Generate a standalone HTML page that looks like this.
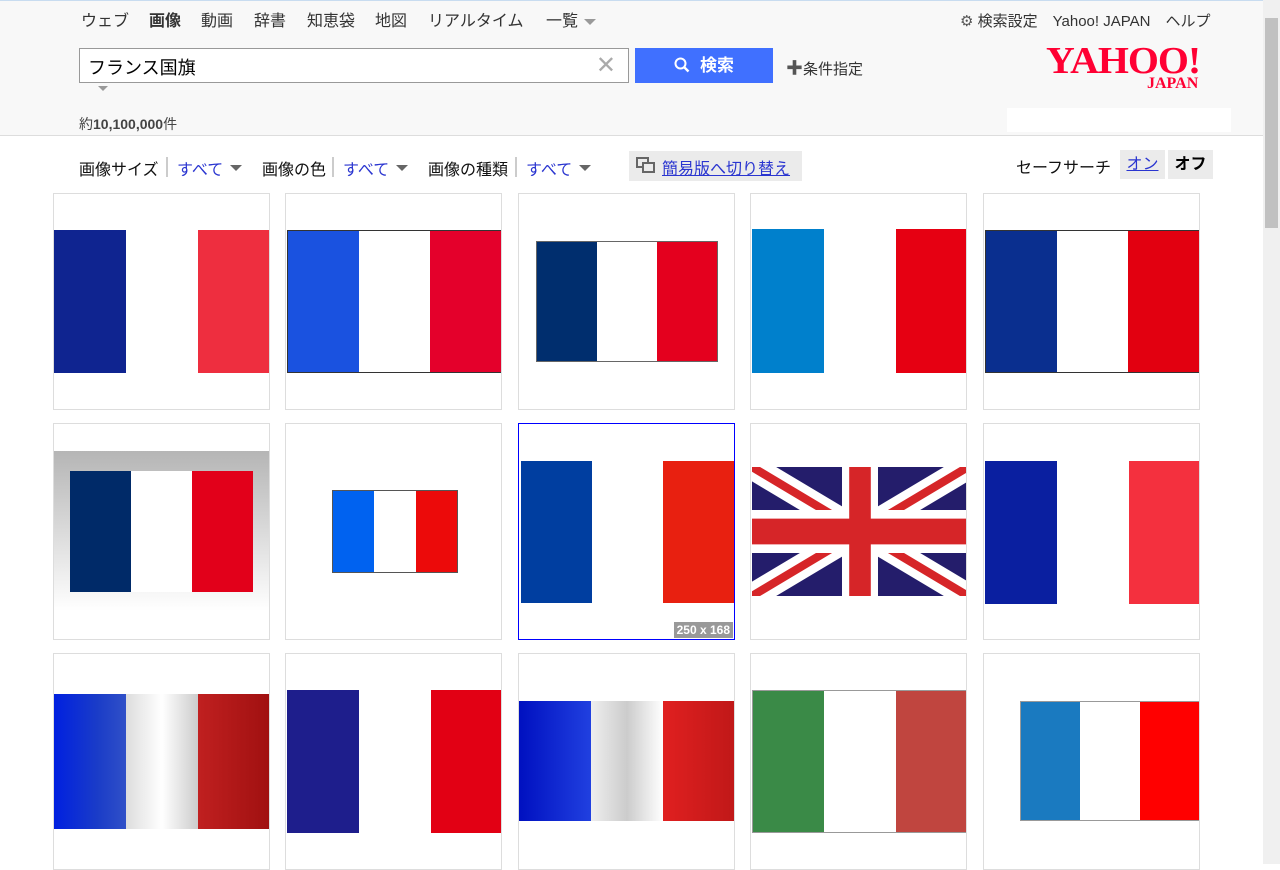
<!DOCTYPE html>
<html><head><meta charset="utf-8"><style>
*{margin:0;padding:0;box-sizing:border-box}
body{width:1280px;height:864px;overflow:hidden;background:#fff;font-family:"Liberation Sans","Noto Sans CJK JP",sans-serif;color:#333;position:relative}
.hdr{position:absolute;left:0;top:0;width:1263px;height:136px;background:#f8f8f8;border-bottom:1px solid #ddd;border-top:1px solid #c8dcf0}
.a{position:absolute;white-space:nowrap}
.nav span{position:absolute;top:0;font-size:16px;color:#333}
.c{position:absolute;width:217px;height:217px;border:1px solid #ddd;background:#fff;overflow:hidden}
.f{position:absolute;display:flex}
.f div{flex:1}
.sb{position:absolute;left:1263px;top:0;width:17px;height:864px;background:#f0f0f0}
.sb div{position:absolute;left:2px;top:18px;width:13px;height:210px;background:#c1c1c1}
.blue{color:#2a35d0}
.tri{display:inline-block;width:0;height:0;border-left:6px solid transparent;border-right:6px solid transparent;border-top:6px solid #666;vertical-align:middle;margin-left:6px}
.fl span{position:absolute;top:0}
.fl .t{top:9px;width:0;height:0;border-left:6px solid transparent;border-right:6px solid transparent;border-top:6px solid #666}
.sep{width:2px;height:20px;background:#ccc;top:1px!important}
</style></head><body>
<div class="hdr"></div>
<div class="a nav" style="left:0;top:7px;width:700px;height:24px"><span style="left:81px">ウェブ</span><span style="left:149px;font-weight:bold">画像</span><span style="left:201px">動画</span><span style="left:254px">辞書</span><span style="left:307px">知恵袋</span><span style="left:375px">地図</span><span style="left:428px">リアルタイム</span><span style="left:546px">一覧<i class="tri" style="border-top-color:#999"></i></span></div>
<div class="a" style="left:960px;top:10px;font-size:15px;color:#333"><span style="color:#555">⚙</span> 検索設定　Yahoo! JAPAN　ヘルプ</div>
<div class="a" style="left:79px;top:48px;width:550px;height:35px;border:1px solid #999;background:#fff;font-size:18px;padding:5px 0 0 8px;color:#000">フランス国旗<span style="position:absolute;right:12px;top:2px;color:#aaa;font-size:24px">✕</span></div>
<div class="a" style="left:98px;top:86px;border-left:5px solid transparent;border-right:5px solid transparent;border-top:5px solid #999"></div>
<div class="a" style="left:635px;top:48px;width:138px;height:35px;background:#4070ff;color:#fff;font-size:17px;font-weight:bold;text-align:center;line-height:35px">
<svg width="16" height="16" viewBox="0 0 16 16" style="vertical-align:-2px;margin-right:10px"><circle cx="6.5" cy="6.5" r="5" fill="none" stroke="#fff" stroke-width="2"/><path d="M10 10l4.5 4.5" stroke="#fff" stroke-width="2.4"/></svg>検索</div>
<div class="a" style="left:786px;top:54px;font-size:15px;color:#333"><b style="font-size:17px;color:#555">✚</b>条件指定</div>
<div class="a" style="left:1046px;top:44px;color:#ff0033;font-family:'Liberation Serif',serif;font-weight:bold;font-size:38px;line-height:34px;letter-spacing:-1px;transform:scaleX(1.05);transform-origin:left">YAHOO!</div>
<div class="a" style="left:1147px;top:75px;color:#ff0033;font-family:'Liberation Serif',serif;font-weight:bold;font-size:16px">JAPAN</div>
<div class="a" style="left:1007px;top:108px;width:224px;height:24px;background:#fff"></div>
<div class="a" style="left:79px;top:114px;font-size:14px;color:#444">約<b>10,100,000</b>件</div>
<div class="a fl" style="left:0;top:156px;width:620px;height:24px;font-size:16px;color:#111">
<span style="left:79px">画像サイズ</span><span class="sep" style="left:166px"></span><span class="blue" style="left:177px">すべて</span><span class="t" style="left:230px"></span>
<span style="left:262px">画像の色</span><span class="sep" style="left:332px"></span><span class="blue" style="left:343px">すべて</span><span class="t" style="left:396px"></span>
<span style="left:428px">画像の種類</span><span class="sep" style="left:515px"></span><span class="blue" style="left:526px">すべて</span><span class="t" style="left:579px"></span></div>
<div class="a" style="left:629px;top:151px;width:173px;height:30px;background:#ebebeb;font-size:16px;padding:4px 0 0 33px"><span style="position:absolute;left:7px;top:6px;width:13px;height:11px;border:2px solid #666"></span><span style="position:absolute;left:13px;top:11px;width:13px;height:11px;border:2px solid #666;background:#ebebeb"></span><a style="color:#2a35d0;text-decoration:underline">簡易版へ切り替え</a></div>
<div class="a" style="left:1016px;top:154px;font-size:16px;color:#111">セーフサーチ</div>
<div class="a" style="left:1120px;top:150px;width:45px;height:29px;background:#ebebeb;font-size:16px;text-align:center;line-height:29px"><a style="color:#2a35d0;text-decoration:underline">オン</a></div>
<div class="a" style="left:1168px;top:150px;width:45px;height:29px;background:#ebebeb;font-size:16px;font-weight:bold;text-align:center;line-height:29px;color:#000">オフ</div>

<!-- row1 -->
<div class="c" style="left:53px;top:193px"><div class="f" style="left:0;top:36px;width:216px;height:143px"><div style="background:#0f2490"></div><div></div><div style="background:#ee2e3f"></div></div></div>
<div class="c" style="left:285px;top:193px"><div class="f" style="left:1px;top:36px;width:215px;height:143px;border:1px solid #333"><div style="background:#1a52e0"></div><div></div><div style="background:#e4002b"></div></div></div>
<div class="c" style="left:518px;top:193px"><div class="f" style="left:17px;top:47px;width:182px;height:121px;border:1px solid #666"><div style="background:#002e6e"></div><div></div><div style="background:#e4001e"></div></div></div>
<div class="c" style="left:750px;top:193px"><div class="f" style="left:1px;top:35px;width:216px;height:144px"><div style="background:#0080cc"></div><div></div><div style="background:#e60012"></div></div></div>
<div class="c" style="left:983px;top:193px"><div class="f" style="left:1px;top:36px;width:215px;height:143px;border:1px solid #333"><div style="background:#0a2f8f"></div><div></div><div style="background:#e20010"></div></div></div>
<!-- row2 -->
<div class="c" style="left:53px;top:423px"><div style="position:absolute;left:0;top:27px;width:216px;height:160px;background:linear-gradient(#b5b5b5,#fff)"></div><div class="f" style="left:16px;top:47px;width:183px;height:121px"><div style="background:#002a68"></div><div style="background:#fff"></div><div style="background:#e2001a"></div></div></div>
<div class="c" style="left:285px;top:423px"><div class="f" style="left:46px;top:66px;width:126px;height:83px;border:1px solid #555"><div style="background:#0062f0"></div><div></div><div style="background:#ec0a0a"></div></div></div>
<div class="c" style="left:518px;top:423px;border-color:#00f"><div class="f" style="left:2px;top:37px;width:213px;height:142px"><div style="background:#003ea0"></div><div></div><div style="background:#e82010"></div></div><div style="position:absolute;right:1px;bottom:1px;background:#999;color:#fff;font-size:12px;padding:1px 3px;font-weight:bold">250 x 168</div></div>
<div class="c" style="left:750px;top:423px"><svg style="position:absolute;left:1px;top:43px" width="216" height="129" viewBox="0 0 60 30" preserveAspectRatio="none"><rect width="60" height="30" fill="#241d6b"/><path d="M0 0L60 30M60 0L0 30" stroke="#fff" stroke-width="6"/><path d="M0 0L60 30M60 0L0 30" stroke="#d62528" stroke-width="2"/><path d="M30 0V30M0 15H60" stroke="#fff" stroke-width="10"/><path d="M30 0V30M0 15H60" stroke="#d62528" stroke-width="6"/></svg></div>
<div class="c" style="left:983px;top:423px"><div class="f" style="left:1px;top:37px;width:216px;height:143px"><div style="background:#0a1fa0"></div><div></div><div style="background:#f4303e"></div></div></div>
<!-- row3 -->
<div class="c" style="left:53px;top:653px"><div class="f" style="left:0;top:40px;width:216px;height:135px"><div style="background:linear-gradient(90deg,#0020e0,#1a3cc8 60%,#3050c8)"></div><div style="background:linear-gradient(90deg,#ddd,#fff,#ccc)"></div><div style="background:linear-gradient(90deg,#c02020,#a01010)"></div></div></div>
<div class="c" style="left:285px;top:653px"><div class="f" style="left:1px;top:36px;width:216px;height:143px"><div style="background:#1e1e8c"></div><div></div><div style="background:#e20014"></div></div></div>
<div class="c" style="left:518px;top:653px"><div class="f" style="left:0;top:47px;width:216px;height:120px"><div style="background:linear-gradient(90deg,#0010c0,#2040e0)"></div><div style="background:linear-gradient(90deg,#eee,#ccc,#fff)"></div><div style="background:linear-gradient(90deg,#e02020,#c01818)"></div></div></div>
<div class="c" style="left:750px;top:653px"><div class="f" style="left:1px;top:36px;width:216px;height:143px;border:1px solid #999"><div style="background:#3a8a47"></div><div></div><div style="background:#c0453f"></div></div></div>
<div class="c" style="left:983px;top:653px"><div class="f" style="left:36px;top:47px;width:180px;height:120px;border:1px solid #999"><div style="background:#1a7ac0"></div><div></div><div style="background:#ff0000"></div></div></div>
<div class="sb"><div></div></div>
</body></html>
